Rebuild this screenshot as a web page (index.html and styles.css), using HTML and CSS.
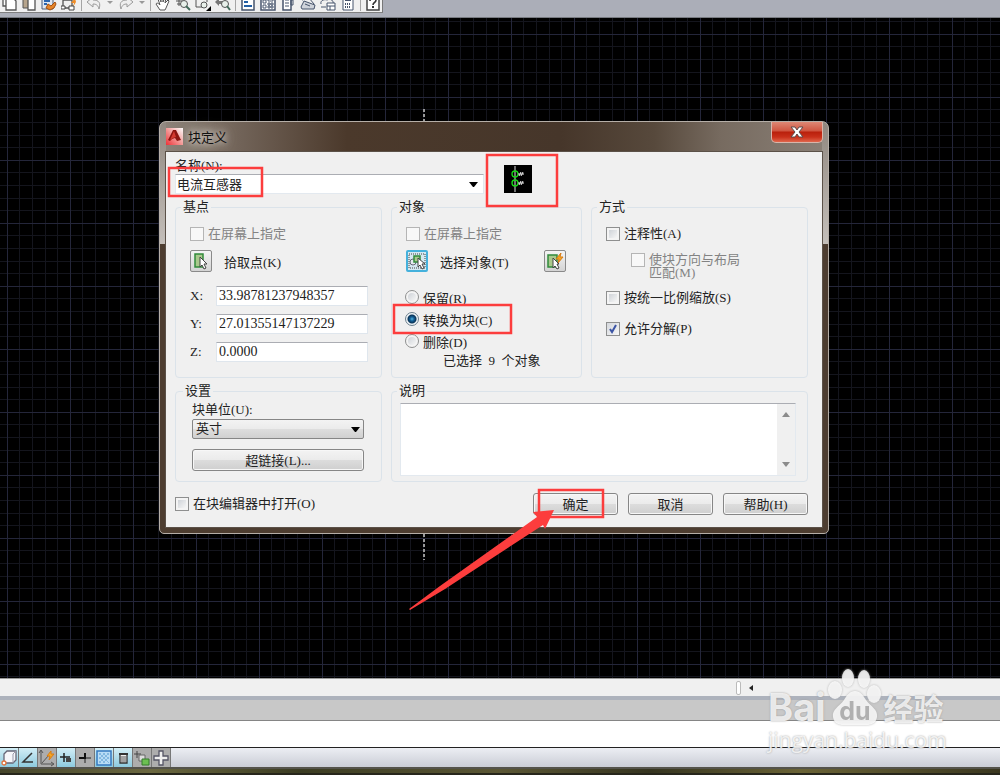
FILE: index.html
```
<!DOCTYPE html>
<html lang="zh-CN">
<head>
    <meta charset="UTF-8">
    <meta name="viewport" content="width=device-width, initial-scale=1.0">
    <title>块定义</title>
    <link rel="stylesheet" href="styles.css">
</head>
<body>
    <header class="toolbar-area">
        <div class="toolbar">
            <button type="button" class="tool" aria-label="复制"><svg viewBox="0 0 16 16"><path d="M2 1v10h3M5 3h7l3 3v9H5z" fill="#fff" stroke="#555" stroke-width="1.3"/></svg></button>
            <button type="button" class="tool" aria-label="粘贴"><svg viewBox="0 0 16 16"><path d="M2 1h9v12H2z" fill="#b6a48c" stroke="#555"/><path d="M7 4h7v11H7z" fill="#fff" stroke="#555" stroke-width="1.3"/></svg></button>
            <button type="button" class="tool" aria-label="特性匹配"><svg viewBox="0 0 16 16"><path d="M1 0h11v14H1z" fill="#dfe7f2" stroke="#4c5c78"/><path d="M3 6h6M3 9h3" stroke="#2c66b0" stroke-width="2"/><path d="M7 9l3 2 4-4 1 2-2 4-4 2-4-2z" fill="#e6852a" stroke="#a14f11"/></svg></button>
            <button type="button" class="tool" aria-label="块编辑器"><svg viewBox="0 0 16 16"><path d="M2 5h9v8H2z" fill="none" stroke="#555" stroke-width="1.3"/><path d="M14 3l-4 5h3l-1 4 3-5z" fill="#ef8d28"/><path d="M0 11h4v3H0zM8 11h5v4H8z" fill="#fff" stroke="#444"/></svg></button>
            <span class="separator"></span>
            <button type="button" class="tool" aria-label="放弃"><svg viewBox="0 0 16 16"><path d="M1 7l6-5v3c6 0 8 3 6 9-1-4-3-5-6-5v3z" fill="#eee" stroke="#9a9a9a"/></svg></button>
            <span class="drop-arrow"></span>
            <button type="button" class="tool" aria-label="重做"><svg viewBox="0 0 16 16"><path d="M15 7L9 2v3C3 5 1 8 3 14c1-4 3-5 6-5v3z" fill="#eee" stroke="#9a9a9a"/></svg></button>
            <span class="drop-arrow"></span>
            <span class="separator"></span>
            <button type="button" class="tool" aria-label="平移"><svg viewBox="0 0 16 16"><path d="M5 15L1 9c1-2 3 0 4 1L3 4c1-1 2 0 3 3V1h2v6l2-5 1 1-1 5 3-3 1 1-3 7-1 2z" fill="#fff" stroke="#555"/></svg></button>
            <button type="button" class="tool" aria-label="实时缩放"><svg viewBox="0 0 16 16"><path d="M1 6h7M2 9h4M4 2v9" stroke="#555"/><circle cx="9" cy="9" r="3.5" fill="#e8f0ea" stroke="#555"/><path d="M11 11l4 4" stroke="#426a5a" stroke-width="2"/></svg></button>
            <button type="button" class="tool" aria-label="窗口缩放"><svg viewBox="0 0 16 16"><path d="M1 2v10h6M3 4h9v3" fill="none" stroke="#555"/><circle cx="9" cy="10" r="3" fill="#e8f0ea" stroke="#555"/><path d="M16 11v5h-5z" fill="#000"/></svg></button>
            <button type="button" class="tool" aria-label="缩放上一个"><svg viewBox="0 0 16 16"><path d="M0 7l4-4v3h4v3H4v2z" fill="#777"/><circle cx="10" cy="9" r="3.5" fill="#e8f0ea" stroke="#555"/><path d="M12 11l3 4" stroke="#426a5a" stroke-width="2"/></svg></button>
            <span class="separator"></span>
            <button type="button" class="tool" aria-label="特性"><svg viewBox="0 0 16 16"><path d="M2 0h12v15H2z" fill="#fff" stroke="#47546c" stroke-width="1.5"/><path d="M4 7h4M4 11h8" stroke="#235fa5" stroke-width="2"/></svg></button>
            <button type="button" class="tool" aria-label="设计中心"><svg viewBox="0 0 16 16"><path d="M1 0h14v15H1z" fill="#fff" stroke="#47546c" stroke-width="1.5"/><path d="M3 5h3v3H3zM3 10h3v3H3zM8 3h5v3H8zM8 8h2v2H8zM11 8h2v2h-2zM8 11h2v2H8zM11 11h2v2h-2z" fill="none" stroke="#47546c"/></svg></button>
            <button type="button" class="tool" aria-label="工具选项板"><svg viewBox="0 0 16 16"><path d="M3 1h8v14H3z" fill="#fff" stroke="#47546c" stroke-width="1.5"/><path d="M11 5h2v5h-2zM5 5h4M5 8h4M5 11h4" fill="none" stroke="#47546c"/></svg></button>
            <button type="button" class="tool" aria-label="图纸集"><svg viewBox="0 0 16 16"><path d="M1 12l3-6 11 4-1 4H2z" fill="#cfd3da" stroke="#47546c"/><path d="M2 5l7-2 5 6M5 9l5 2" fill="none" stroke="#47546c"/></svg></button>
            <button type="button" class="tool" aria-label="标记集"><svg viewBox="0 0 16 16"><path d="M1 9c-1-4 4-5 6-4 4-2 7 1 6 4M1 12h5" fill="none" stroke="#47546c"/><path d="M7 8h8v7H7zM7 11h8M10 11v4" fill="#fff" stroke="#47546c"/></svg></button>
            <button type="button" class="tool" aria-label="计算器"><svg viewBox="0 0 16 16"><path d="M3 0h10v15H3z" fill="#fff" stroke="#47546c"/><path d="M5 5h6" stroke="#47546c" stroke-width="2"/><path d="M5 9h6M5 12h6" stroke="#47546c" stroke-width="2" stroke-dasharray="1 1"/></svg></button>
            <span class="separator"></span>
            <button type="button" class="tool" aria-label="帮助"><svg viewBox="0 0 16 16"><path d="M2 0h12v15H2z" fill="#fff" stroke="#444" stroke-width="1.5"/><path d="M5 6c0-4 6-4 6-1S8 7 8 10" fill="none" stroke="#333" stroke-width="1.6"/><path d="M7 11h2v2H7z" fill="#333"/></svg></button>
        </div>
    </header>

    <main class="drawing">
        <div class="crosshair"></div>

        <form class="dialog">
            <div class="title-bar">
                <svg class="app-icon" viewBox="0 0 17 17">
                    <defs><linearGradient id="appRed" x1="0" y1="1" x2="1" y2="0"><stop offset="0" stop-color="#ee2f35"/><stop offset=".5" stop-color="#f49a98"/><stop offset="1" stop-color="#fff"/></linearGradient></defs>
                    <path d="M0 0h17v17H0z" fill="url(#appRed)"/>
                    <path d="M7 2h3l5 10-4 1-2-3-3 1-2 2-2-1z" fill="#8d1510"/>
                    <path d="M8 3l2 6-3 1-3 2z" fill="#d3392f"/>
                </svg>
                <h1>块定义</h1>
                <button type="button" class="close" aria-label="关闭"><svg viewBox="0 0 14 12"><path d="M1 1h4l2 3 2-3h4L9 6l4 5H9L7 8l-2 3H1l4-5z" fill="#fff" stroke="#5c4a4a"/></svg></button>
            </div>

            <div class="dialog-body">
                <div class="name-row">
                    <div class="name-field">
                        <label for="blockName">名称(N):</label>
                        <div class="combobox">
                            <input type="text" id="blockName" value="电流互感器">
                            <button type="button" aria-label="展开"><svg viewBox="0 0 9 5"><path d="M0 0h9L5 5H4z"/></svg></button>
                        </div>
                    </div>
                    <svg class="preview" viewBox="0 0 28 28">
                        <path d="M0 0h28v28H0z" fill="#000"/>
                        <path d="M11 1v26" stroke="#ddd"/>
                        <circle cx="11" cy="9" r="3" fill="none" stroke="#18d818" stroke-width="1.3"/>
                        <circle cx="11" cy="18" r="3" fill="none" stroke="#18d818" stroke-width="1.3"/>
                        <path d="M14 9h6M15 11l2-4M17 11l2-4M14 18h6M15 20l2-4M17 20l2-4" stroke="#eee"/>
                    </svg>
                </div>

                <div class="groups">
                    <fieldset>
                        <legend>基点</legend>
                        <label class="check disabled"><input type="checkbox" disabled>在屏幕上指定</label>
                        <div class="pick-row">
                            <button type="button" class="pick" id="pickPoint"><svg viewBox="0 0 18 18"><path d="M3 2h8v13H3z" fill="#a9c98c" stroke="#318a3b" stroke-width="1.5"/><path d="M8 5v10l2-2 2 4 2-1-2-4h3z" fill="#fff" stroke="#444"/></svg></button>
                            <label for="pickPoint">拾取点(K)</label>
                        </div>
                        <div class="coords">
                            <label for="baseX">X:</label><input type="text" id="baseX" value="33.98781237948357">
                            <label for="baseY">Y:</label><input type="text" id="baseY" value="27.01355147137229">
                            <label for="baseZ">Z:</label><input type="text" id="baseZ" value="0.0000">
                        </div>
                    </fieldset>

                    <fieldset>
                        <legend>对象</legend>
                        <label class="check disabled"><input type="checkbox" disabled>在屏幕上指定</label>
                        <div class="pick-row">
                            <button type="button" class="pick active" id="pickObjects"><svg viewBox="0 0 18 18"><path d="M1 2h16v14H1z" fill="none" stroke="#444" stroke-dasharray="1 1"/><circle cx="5" cy="10" r="3" fill="#e4ebef" stroke="#667"/><path d="M6 4h6v6H6z" fill="#a9c98c" stroke="#318a3b" stroke-width="1.5"/><path d="M10 6v9l2-2 2 4 2-1-2-4h3z" fill="#fff" stroke="#444"/></svg></button>
                            <label for="pickObjects">选择对象(T)</label>
                            <button type="button" class="pick quick" aria-label="快速选择"><svg viewBox="0 0 18 18"><path d="M2 3h9v12H2z" fill="#a9c98c" stroke="#318a3b" stroke-width="1.5"/><path d="M15 1l-5 6h3l-1 4 5-6h-3z" fill="#f5a623" stroke="#d97c12"/><path d="M7 6v10l2-2 2 3 2-1-2-4h2z" fill="#fff" stroke="#444"/></svg></button>
                        </div>
                        <div class="radios">
                            <label><input type="radio" name="convert">保留(R)</label>
                            <label><input type="radio" name="convert" checked>转换为块(C)</label>
                            <label><input type="radio" name="convert">删除(D)</label>
                            <p>已选择&nbsp; 9&nbsp; 个对象</p>
                        </div>
                    </fieldset>

                    <fieldset>
                        <legend>方式</legend>
                        <label class="check"><input type="checkbox">注释性(A)</label>
                        <label class="check sub disabled"><input type="checkbox" disabled><span>使块方向与布局<br>匹配(M)</span></label>
                        <label class="check scale"><input type="checkbox">按统一比例缩放(S)</label>
                        <label class="check explode"><input type="checkbox" checked>允许分解(P)</label>
                    </fieldset>
                </div>

                <div class="groups lower">
                    <fieldset class="settings">
                        <legend>设置</legend>
                        <label for="units">块单位(U):</label>
                        <div class="select">
                            <select id="units"><option>英寸</option><option>毫米</option></select>
                            <svg viewBox="0 0 9 5"><path d="M0 0h9L5 5H4z"/></svg>
                        </div>
                        <button type="button" class="btn">超链接(L)...</button>
                    </fieldset>
                    <fieldset class="description">
                        <legend>说明</legend>
                        <div class="memo">
                            <textarea aria-label="说明"></textarea>
                            <div class="scrollbar">
                                <svg viewBox="0 0 8 5"><path d="M4 0l4 5H0z"/></svg>
                                <svg viewBox="0 0 8 5"><path d="M0 0h8L4 5z"/></svg>
                            </div>
                        </div>
                    </fieldset>
                </div>

                <div class="footer">
                    <label class="check"><input type="checkbox">在块编辑器中打开(O)</label>
                    <button type="submit" class="btn">确定</button>
                    <button type="button" class="btn">取消</button>
                    <button type="button" class="btn">帮助(H)</button>
                </div>
            </div>
        </form>
    </main>

    <div class="h-scroll">
        <span class="grip"></span>
        <svg viewBox="0 0 4 6"><path d="M4 0v6L0 3z" fill="#222"/></svg>
    </div>
    <div class="command-history"></div>
    <div class="command-line"></div>
    <footer class="status-bar">
        <button type="button" class="on" aria-label="三维对象捕捉"><svg viewBox="0 0 18 18"><path d="M4 5l3-3h9v9l-3 3H4z" fill="#f6f6fa" stroke="#667" stroke-width="1.3"/><path d="M13 5v9M13 5l3-3" stroke="#99a"/><circle cx="4" cy="14" r="2" fill="#fff" stroke="#e2733c" stroke-width="1.3"/></svg></button>
        <button type="button" class="on" aria-label="对象捕捉追踪"><svg viewBox="0 0 18 18"><path d="M13 4L4 13h10" fill="none" stroke="#333" stroke-width="1.5"/></svg></button>
        <button type="button" aria-label="动态UCS"><svg viewBox="0 0 18 18"><path d="M3 2v13h12M1 4l2-3 2 3M13 13l3 2-3 2M4 14l7-8" fill="none" stroke="#555"/><path d="M13 2l-4 5h3l-1 4 5-6h-3z" fill="#f5a623" stroke="#d97c12"/></svg></button>
        <button type="button" class="on" aria-label="动态输入"><svg viewBox="0 0 18 18"><path d="M3 8h10M7 4v9" stroke="#222" stroke-width="1.5"/><path d="M9 9h5v4H9z" fill="#444"/></svg></button>
        <button type="button" aria-label="线宽"><svg viewBox="0 0 18 18"><path d="M3 9h12M9 4v10" stroke="#222"/><path d="M3 9h6V4" fill="none" stroke="#111" stroke-width="2"/></svg></button>
        <button type="button" class="on" aria-label="透明度"><svg viewBox="0 0 18 18"><path d="M2 2h14v14H2z" fill="#b8dcf5" stroke="#3479c0" stroke-width="1.5"/><path d="M4 4l10 10M8 4l6 6M12 4l2 2M4 8l6 6M4 12l2 2M14 4L4 14M10 4L4 10M6 4L4 6M14 8l-6 6" stroke="#73aedb" stroke-width=".8"/></svg></button>
        <button type="button" class="on" aria-label="快捷特性"><svg viewBox="0 0 18 18"><path d="M6 5h7v9H6z" fill="#eee" stroke="#333" stroke-width="1.3"/><path d="M5 5h9" stroke="#333" stroke-width="2"/><path d="M7 8h5M7 10h5M7 12h5" stroke="#555"/></svg></button>
        <button type="button" aria-label="选择循环"><svg viewBox="0 0 18 18"><path d="M1 5h7M4 2v7" stroke="#444"/><path d="M6 6h6v6H6z" fill="#ddd" stroke="#666"/><path d="M9 10h7v6H9z" fill="#6cbf52" stroke="#347a2d"/></svg></button>
        <button type="button" aria-label="注释监视器"><svg viewBox="0 0 18 18"><path d="M7 2h4v5h5v4h-5v5H7v-5H2V7h5z" fill="#eee" stroke="#556" stroke-width="1.3"/></svg></button>
    </footer>
    <div class="desktop-edge"></div>

    <!-- red callouts -->
    <svg class="callouts" width="1000" height="775" viewBox="0 0 1000 775">
        <g fill="none" stroke="#fc3d3d" stroke-width="2.5">
            <path d="M169 168h93v28h-93z"/>
            <path d="M487 155h70v51h-70z"/>
            <path d="M394 305h117v28H394z"/>
            <path d="M539 490h64v27h-64z"/>
        </g>
        <path d="M554 510l-21 2 4 5-97 69-31 23 1 1 35-21 98-64 2 4z" fill="#fc3d3d"/>
    </svg>

    <div class="watermark">
        <div class="brand">
            <span>Bai</span>
            <svg viewBox="0 0 54 58">
                <ellipse cx="7" cy="21" rx="7" ry="9"/><ellipse cx="20" cy="9" rx="6" ry="9"/>
                <ellipse cx="36" cy="10" rx="6" ry="9"/><ellipse cx="46" cy="25" rx="7" ry="9"/>
                <path d="M27 22c-5 0-8 4-11 9-5 7-12 9-11 17 1 6 5 8 11 8h22c6 0 10-2 11-8 1-8-6-10-11-17-3-5-6-9-11-9z"/>
                <text x="27" y="51">du</text>
            </svg>
            <span class="cn">经验</span>
        </div>
        <div class="site">jingyan.baidu.com</div>
    </div>
</body>
</html>
```

FILE: styles.css
```
* {
    margin: 0;
    padding: 0;
    box-sizing: border-box;
}

body {
    position: relative;
    display: flex;
    flex-direction: column;
    height: 100vh;
    overflow: hidden;
    font-family: "Liberation Serif", "Noto Sans CJK SC", serif;
    font-size: 13px;
    color: #222;
    background: #000;
}

button,
input,
select,
textarea {
    font: inherit;
    color: inherit;
}

svg {
    display: block;
}

/* top toolbar */
.toolbar-area {
    height: 18px;
    background: #abaeb8;
    border-bottom: 1px solid #777a80;
}

.toolbar {
    display: flex;
    align-items: flex-end;
    gap: 4px;
    width: 383px;
    height: 13px;
    padding: 0 1px 1px;
    overflow: hidden;
    background: #f0f0f0;
    border-right: 1px solid #777;
    border-bottom: 1px solid #808080;
}

.tool {
    flex: none;
    width: 16px;
    height: 16px;
    border: none;
    background: none;
}

.separator {
    width: 1px;
    height: 11px;
    background: #a5a5a5;
}

.drop-arrow {
    margin: 0 1px 7px;
    border: 3px solid transparent;
    border-top-color: #999;
    border-bottom: none;
}

/* drawing area, grid line every 63px with four lines between */
.drawing {
    position: relative;
    flex: 1;
    background-color: #000;
    background-image:
        linear-gradient(90deg, #24263a 1px, transparent 1px),
        linear-gradient(#24263a 1px, transparent 1px),
        linear-gradient(90deg, transparent 12px, #14151d 12px 13px, transparent 13px 25px, #14151d 25px 26px, transparent 26px 38px, #14151d 38px 39px, transparent 39px 50px, #14151d 50px 51px, transparent 51px),
        linear-gradient(transparent 12px, #14151d 12px 13px, transparent 13px 25px, #14151d 25px 26px, transparent 26px 38px, #14151d 38px 39px, transparent 39px 50px, #14151d 50px 51px, transparent 51px);
    background-size: 63px 63px;
    background-position: 7px 16px;
}

.crosshair {
    position: absolute;
    left: 423px;
    top: 91px;
    width: 2px;
    height: 451px;
    background: repeating-linear-gradient(#999 0 3px, transparent 3px 5px);
}

/* dialog window */
.dialog {
    position: absolute;
    left: 159px;
    top: 103px;
    width: 670px;
    padding: 0 5px 5px;
    border: 1px solid #b5aea7;
    border-radius: 7px 7px 5px 5px;
    background:
        linear-gradient(#90877f, #c4bfba 122px, transparent 122px) left / 6px 100% no-repeat,
        linear-gradient(#90877f, #c4bfba 122px, transparent 122px) right / 6px 100% no-repeat,
        linear-gradient(90deg, #8e847b, #716358 12%, #4b392b 28%, #46362a 60%, #57493c 74%, #776b60 84%, #8a8077) top / 100% 30px no-repeat,
        #4d3d30;
}

.title-bar {
    display: flex;
    align-items: center;
    gap: 5px;
    height: 29px;
    padding-left: 1px;
}

.app-icon {
    width: 17px;
    height: 17px;
}

.title-bar h1 {
    flex: 1;
    font-family: "Noto Sans CJK SC", sans-serif;
    font-size: 13px;
    font-weight: 400;
    line-height: 20px;
    color: #111;
    text-shadow: 0 0 6px #d5cec6, 0 0 10px #d5cec6, 0 0 14px #b9b0a7;
}

.close {
    display: flex;
    align-items: center;
    justify-content: center;
    align-self: flex-start;
    width: 52px;
    height: 21px;
    border: 1px solid #d9b5aa;
    border-top: none;
    border-radius: 0 0 5px 5px;
    background: linear-gradient(#dd8774, #cf5540 45%, #b9200c 50%, #c9301a 75%, #e0664c);
}

.close svg {
    width: 14px;
    height: 12px;
}

.dialog-body {
    padding: 5px 14px 12px 9px;
    border: 1px solid #5b5148;
    background: #f0f0f0;
}

.name-row {
    display: flex;
    align-items: flex-start;
    gap: 20px;
    margin-bottom: 5px;
}

.name-field {
    width: 309px;
}

.name-field label {
    display: block;
    line-height: 17px;
}

.combobox {
    display: flex;
    height: 20px;
    border: 1px solid #e3e9ef;
    border-top-color: #abadb3;
    background: #fff;
}

.combobox input {
    flex: 1;
    min-width: 0;
    padding: 0 0 2px 1px;
    border: none;
    background: none;
}

.combobox button {
    width: 18px;
    padding-left: 4px;
    border: none;
    background: none;
}

.combobox svg,
.select svg {
    width: 9px;
    height: 5px;
}

.preview {
    width: 28px;
    height: 28px;
    margin-top: 8px;
}

.groups {
    display: grid;
    grid-template-columns: 207fr 191fr 217fr;
    gap: 9px;
    margin-bottom: 5px;
}

.lower {
    grid-template-columns: 207fr 417fr;
    margin-bottom: 11px;
}

fieldset {
    min-width: 0;
    padding: 9px 13px 7px 14px;
    border: 1px solid #dbe3ea;
    border-radius: 4px;
}

legend {
    margin-left: -9px;
    padding: 0 2px;
    line-height: 16px;
}

.check {
    display: flex;
    align-items: center;
    gap: 4px;
    line-height: 20px;
    white-space: nowrap;
}

.disabled {
    color: #838383;
}

input[type="checkbox"],
input[type="radio"] {
    appearance: none;
    flex: none;
    width: 14px;
    height: 14px;
    border: 1px solid #8e8f8f;
    background: linear-gradient(135deg, #cfd3d8, #f6f6f6) content-box, #f4f4f4;
    padding: 2px;
}

input[type="checkbox"]:disabled {
    border-color: #b5b5b5;
    background: #f8f8f8;
}

.check input:checked {
    background:
        url("data:image/svg+xml,%3Csvg xmlns='http://www.w3.org/2000/svg' viewBox='0 0 12 12'%3E%3Cpath d='M3 6l2 3 4-7' fill='none' stroke='%233c55a5' stroke-width='2'/%3E%3C/svg%3E"),
        linear-gradient(135deg, #d5d8dd, #f6f6f6);
}

input[type="radio"] {
    border-radius: 50%;
}

input[type="radio"]:checked {
    border-color: #6b7f8c;
    background: radial-gradient(circle at center, #4fb4e0, #146096 2px, #0b3457 4px, transparent 5px), #eef3f6;
    background-origin: border-box;
}

.pick-row {
    display: flex;
    align-items: center;
    gap: 12px;
    margin-top: 6px;
}

.pick {
    width: 22px;
    height: 22px;
    padding: 1px;
    border: 1px solid #8a8a8a;
    border-radius: 2px;
    background: linear-gradient(#f4f4f4, #d4d4d4);
}

.active {
    border: 2px solid #45b1dc;
    padding: 0;
    background: #d5e8f1;
}

.quick {
    margin-left: auto;
    margin-right: 2px;
}

.coords {
    display: grid;
    grid-template-columns: 26px 1fr;
    row-gap: 8px;
    margin-top: 14px;
    line-height: 20px;
}

.coords input {
    min-width: 0;
    height: 20px;
    padding: 0 2px;
    border: 1px solid #dfe6ed;
    border-top-color: #abadb3;
    background: #fff;
    font-size: 14px;
}

.radios {
    margin-top: 14px;
}

.radios label {
    display: flex;
    align-items: center;
    gap: 4px;
    height: 22px;
}

.radios label input {
    margin-left: -1px;
}

.radios p {
    padding-left: 37px;
    line-height: 18px;
}

.sub {
    align-items: flex-start;
    margin-top: 9px;
    padding-left: 25px;
    line-height: 13px;
}

.scale {
    margin-top: 9px;
}

.explode {
    margin-top: 11px;
}

.btn {
    width: 86px;
    height: 22px;
    padding-bottom: 2px;
    border: 1px solid #868686;
    border-radius: 3px;
    background: linear-gradient(#f3f3f3, #ebebeb 48%, #dcdcdc 52%, #cfcfcf);
    box-shadow: inset 0 0 0 1px #f7f7f7;
}

.settings {
    padding: 2px 17px 9px 16px;
}

.settings label {
    display: block;
    line-height: 18px;
}

.settings .btn {
    width: 100%;
    margin-top: 10px;
}

.select {
    position: relative;
}

.select select {
    display: block;
    appearance: none;
    width: 100%;
    height: 20px;
    padding: 0 0 1px 3px;
    border: 1px solid #868686;
    border-radius: 2px;
    background: linear-gradient(#f3f3f3, #ebebeb 48%, #dddddd 52%, #d0d0d0);
}

.select svg {
    position: absolute;
    right: 4px;
    top: 8px;
    pointer-events: none;
}

.description {
    padding: 4px 11px 5px 8px;
}

.description legend {
    margin-left: -3px;
}

.memo {
    display: flex;
    height: 73px;
    border: 1px solid #e3e9ef;
    border-top-color: #abadb3;
    background: #fff;
}

.memo textarea {
    flex: 1;
    border: none;
    resize: none;
    background: none;
}

.scrollbar {
    display: flex;
    flex-direction: column;
    align-items: center;
    justify-content: space-between;
    width: 18px;
    padding: 8px 0;
    background: #f0f0f0;
}

.scrollbar svg {
    width: 8px;
    height: 5px;
    fill: #8b8b8b;
}

.footer {
    display: flex;
    align-items: center;
    gap: 10px;
}

.footer .btn {
    width: 85px;
}

.footer .check {
    flex: 1;
}

/* bars below the drawing */
.h-scroll {
    display: flex;
    align-items: center;
    gap: 8px;
    height: 18px;
    padding-left: 736px;
    background: #f0f0f0;
    border-top: 1px solid #999;
}

.grip {
    width: 5px;
    height: 14px;
    border: 1px solid #bbb;
    border-radius: 2px;
    background: #fff;
}

.h-scroll svg {
    width: 4px;
    height: 6px;
}

.command-history {
    height: 25px;
    border-top: 4px solid #adb2bc;
    border-bottom: 1px solid #858585;
    background: #c8c8c8;
}

.command-line {
    height: 27px;
    background: #fff;
    border-bottom: 1px solid #222;
}

.status-bar {
    display: flex;
    height: 19px;
    background: linear-gradient(#eceef3, #cacdd6);
}

.status-bar button {
    width: 19px;
    height: 19px;
    border: none;
    border-right: 1px solid #777;
    background: #adadad;
}

.status-bar button.on {
    background: linear-gradient(#d3eef6, #8dcade);
}

.desktop-edge {
    height: 8px;
    border-top: 2px solid #54534b;
    border-bottom: 2px solid #27261b;
    background: linear-gradient(90deg, #45452a, #6b6840 15%, #3b3c22 30%, #5b5735 50%, #35341f 65%, #6a6336 80%, #3a371f);
}

.callouts {
    position: absolute;
    left: 0;
    top: 0;
    pointer-events: none;
}

.watermark {
    position: absolute;
    left: 768px;
    top: 669px;
    color: rgba(255, 255, 255, 0.8);
    text-shadow: 0 0 2px #999;
    pointer-events: none;
}

.brand {
    display: flex;
    align-items: flex-end;
    height: 58px;
    font-family: Inter, sans-serif;
    font-size: 38px;
    font-weight: 700;
    line-height: 40px;
}

.brand svg {
    width: 54px;
    height: 58px;
    margin: 0 2px;
    fill: rgba(255, 255, 255, 0.8);
    filter: drop-shadow(0 0 1px #aaa);
}

.brand text {
    fill: #b0b0b0;
    font-size: 25px;
    text-anchor: middle;
    text-shadow: none;
}

.brand .cn {
    font-family: "Noto Sans CJK SC", sans-serif;
    font-size: 30px;
}

.site {
    font-family: "Open Sans", sans-serif;
    font-size: 21px;
    line-height: 26px;
}
```
